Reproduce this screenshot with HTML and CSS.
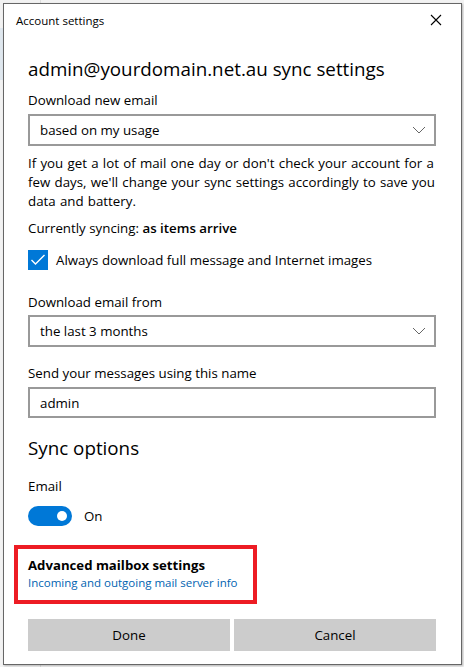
FILE: index.html
```html
<!DOCTYPE html>
<html lang="en">
<head>
<meta charset="utf-8">
<title>Account settings</title>
<link rel="stylesheet" href="styles.css">
</head>
<body>
<div class="dialog">
  <div class="titlebar">
    <span class="title">Account settings</span>
    <svg class="close" width="12" height="12" viewBox="0 0 12 12"><path d="M1 1 L11 11 M11 1 L1 11" stroke="#000" stroke-width="1.1" fill="none"/></svg>
  </div>
  <div class="content">
    <h1 class="heading">admin@yourdomain.net.au sync settings</h1>
    <div class="label l1">Download new email</div>
    <div class="select s1">
      <span>based on my usage</span>
      <svg class="chev" width="14" height="8" viewBox="0 0 14 8"><path d="M1 1 L7 7 L13 1" stroke="#666" stroke-width="1" fill="none"/></svg>
    </div>
    <p class="para">If you get a lot of mail one day or don't check your account for a few days, we'll change your sync settings accordingly to save you data and battery.</p>
    <div class="label current">Currently syncing: <b>as items arrive</b></div>
    <div class="check-row">
      <span class="checkbox"><svg width="20" height="20" viewBox="0 0 20 20"><path d="M3.5 10 L7.5 14 L16.5 5" stroke="#fff" stroke-width="1.4" fill="none"/></svg></span>
      <span class="label">Always download full message and Internet images</span>
    </div>
    <div class="label l2">Download email from</div>
    <div class="select s2">
      <span>the last 3 months</span>
      <svg class="chev" width="14" height="8" viewBox="0 0 14 8"><path d="M1 1 L7 7 L13 1" stroke="#666" stroke-width="1" fill="none"/></svg>
    </div>
    <div class="label l3">Send your messages using this name</div>
    <div class="select input"><span>admin</span></div>
    <h2 class="heading sync">Sync options</h2>
    <div class="label email">Email</div>
    <div class="toggle-row">
      <span class="toggle"><span class="knob"></span></span>
      <span class="label">On</span>
    </div>
    <div class="advanced">
      <div class="adv-title">Advanced mailbox settings</div>
      <div class="adv-link">Incoming and outgoing mail server info</div>
    </div>
    <div class="buttons">
      <div class="btn">Done</div>
      <div class="btn">Cancel</div>
    </div>
  </div>
</div>
</body>
</html>
```

FILE: styles.css
```css
* { box-sizing: border-box; }
html, body { margin: 0; padding: 0; }
body {
  width: 464px;
  height: 667px;
  overflow: hidden;
  background:
    linear-gradient(#dfe7ee, #dfe7ee) 0 28px / 3px 52px no-repeat,
    linear-gradient(#dcdcdc, #dcdcdc) 40px 0 / 1px 667px no-repeat,
    #f2f2f2;
  font-family: "Open Sans", "Noto Sans", sans-serif;
  color: #000;
  padding: 3px;
}
.dialog {
  width: 459px;
  height: 662px;
  background: #fff;
  border: 1px solid #666;
  box-shadow: 1px 1px 2px rgba(0,0,0,0.25);
}
.titlebar {
  height: 32px;
  display: flex;
  align-items: center;
  justify-content: space-between;
  padding: 0 19px 0 12px;
}
.title { font-size: 11.5px; }
.close { display: block; }
.content {
  padding: 0 25px 0 24px;
  display: flex;
  flex-direction: column;
}
.heading {
  margin: 19px 0 0;
  font-size: 18.8px;
  font-weight: 400;
  line-height: 28px;
  height: 28px;
}
.label { font-size: 13.3px; line-height: 20px; }
.l1 { margin-top: 7px; }
.select {
  margin-top: 4px;
  height: 32px;
  border: 2px solid #999;
  display: flex;
  align-items: center;
  justify-content: space-between;
  padding: 0 8px 0 10px;
  font-size: 13.3px;
}
.chev { display: block; }
.para {
  margin: 8px 0 0;
  font-size: 13.3px;
  line-height: 19px;
  word-spacing: 0.8px;
}
.current { margin-top: 7px; }
.current b { font-weight: 600; }
.check-row {
  margin-top: 12px;
  display: flex;
  align-items: center;
  gap: 8px;
}
.checkbox {
  width: 20px;
  height: 20px;
  background: #0078d7;
  display: block;
}
.checkbox svg { display: block; }
.l2 { margin-top: 22px; }
.s2 { margin-top: 3px; }
.l3 { margin-top: 16px; }
.input { margin-top: 4px; height: 31px; }
.sync { margin-top: 16px; }
.email { margin-top: 14px; }
.toggle-row {
  margin-top: 10px;
  display: flex;
  align-items: center;
  gap: 12px;
}
.toggle {
  width: 44px;
  height: 20px;
  border-radius: 10px;
  background: #0078d7;
  display: flex;
  align-items: center;
  justify-content: flex-end;
  padding-right: 5px;
}
.knob {
  width: 10px;
  height: 10px;
  border-radius: 50%;
  background: #fff;
}
.advanced {
  margin: 19px 0 0 -14px;
  width: 243px;
  height: 59px;
  border: 4px solid #ed1c24;
  padding: 6px 0 0 10px;
}
.adv-title { font-size: 13.2px; font-weight: 700; line-height: 20px; }
.adv-link { font-size: 11.5px; line-height: 16px; color: #0063b1; }
.buttons {
  margin-top: 15px;
  display: grid;
  grid-template-columns: 1fr 1fr;
  gap: 4px;
}
.btn {
  height: 32px;
  background: #ccc;
  display: flex;
  align-items: center;
  justify-content: center;
  font-size: 13.3px;
}
```
